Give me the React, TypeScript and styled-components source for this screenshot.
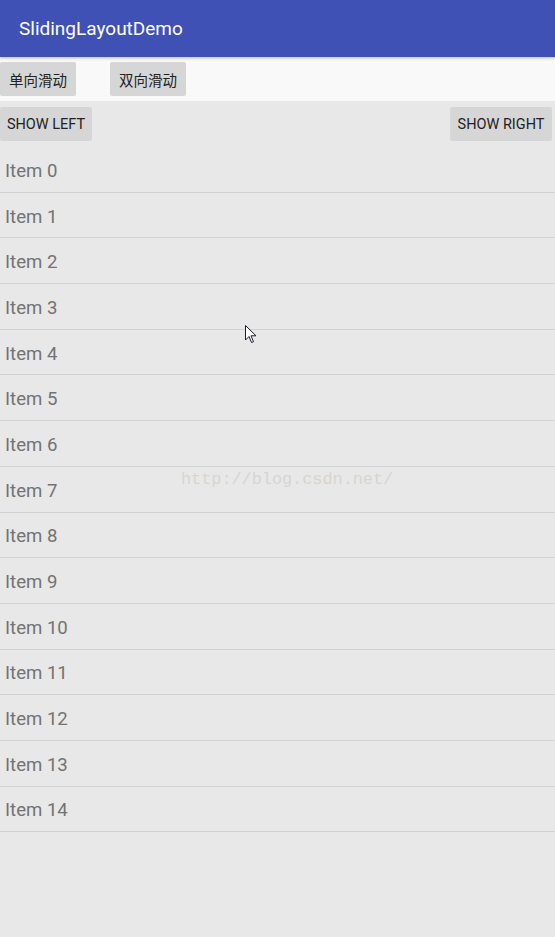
import React from "react";
import styled, { createGlobalStyle } from "styled-components";

const Global = createGlobalStyle`
  html, body { margin: 0; padding: 0; background: #e8e8e8; }
  body { font-family: Roboto, "Noto Sans CJK SC", sans-serif; }
  * { box-sizing: border-box; }
`;

const Screen = styled.div`
  position: relative;
  width: 555px;
  height: 937px;
  background: #e8e8e8;
  overflow: hidden;
  display: flex;
  flex-direction: column;
`;

const AppBar = styled.header`
  height: 57px;
  background: #3f51b5;
  display: flex;
  align-items: center;
  padding-left: 19px;
  padding-bottom: 1px;
  color: #ffffff;
  font-size: 19px;
  box-shadow: 0 1px 3px rgba(0, 0, 0, 0.25);
  position: relative;
  z-index: 1;
`;

const ModeBar = styled.div`
  height: 44px;
  background: #f9f9f9;
  display: flex;
  align-items: flex-start;
  padding-top: 5px;
  gap: 34px;
`;

const FlatButton = styled.button<{ $w: number }>`
  width: ${(p) => p.$w}px;
  height: 34px;
  border: none;
  border-radius: 2px;
  background: #d6d6d6;
  color: #222222;
  font-family: Roboto, "Noto Sans CJK SC", sans-serif;
  font-size: 14.5px;
  padding: 0;
  display: flex;
  align-items: center;
  justify-content: center;
`;

const ActionRow = styled.div`
  height: 46px;
  display: flex;
  justify-content: space-between;
  align-items: flex-start;
  padding: 6px 3px 0 0;
`;

const List = styled.ul`
  list-style: none;
  margin: 0;
  padding: 0;
`;

const Row = styled.li`
  height: 45.7px;
  border-bottom: 1px solid #d2d2d2;
  display: flex;
  align-items: center;
  padding-left: 5px;
  padding-top: 3px;
  color: #737373;
  font-size: 18.6px;
`;

const Watermark = styled.div`
  position: absolute;
  left: 181px;
  top: 470px;
  font-family: "Liberation Mono", "DejaVu Sans Mono", monospace;
  font-size: 17px;
  letter-spacing: -0.1px;
  color: #d8d5cf;
  pointer-events: none;
`;

const Cursor = styled.svg`
  position: absolute;
  left: 245px;
  top: 325px;
`;

export default function App() {
  const items = Array.from({ length: 15 }, (_, i) => `Item ${i}`);
  return (
    <Screen>
      <Global />
      <AppBar>SlidingLayoutDemo</AppBar>
      <ModeBar>
        <FlatButton $w={76}>单向滑动</FlatButton>
        <FlatButton $w={76}>双向滑动</FlatButton>
      </ModeBar>
      <ActionRow>
        <FlatButton $w={92}>SHOW LEFT</FlatButton>
        <FlatButton $w={102}>SHOW RIGHT</FlatButton>
      </ActionRow>
      <List>
        {items.map((t) => (
          <Row key={t}>{t}</Row>
        ))}
      </List>
      <Watermark>http://blog.csdn.net/</Watermark>
      <Cursor width="13" height="20" viewBox="0 0 13 20">
        <path
          d="M0.5 0.5 L0.5 15 L4 11.5 L6.5 17.5 L8.5 16.7 L6 10.8 L11 10.8 Z"
          fill="#ffffff"
          stroke="#1a1a2a"
          strokeWidth="1"
          strokeLinejoin="miter"
        />
      </Cursor>
    </Screen>
  );
}
